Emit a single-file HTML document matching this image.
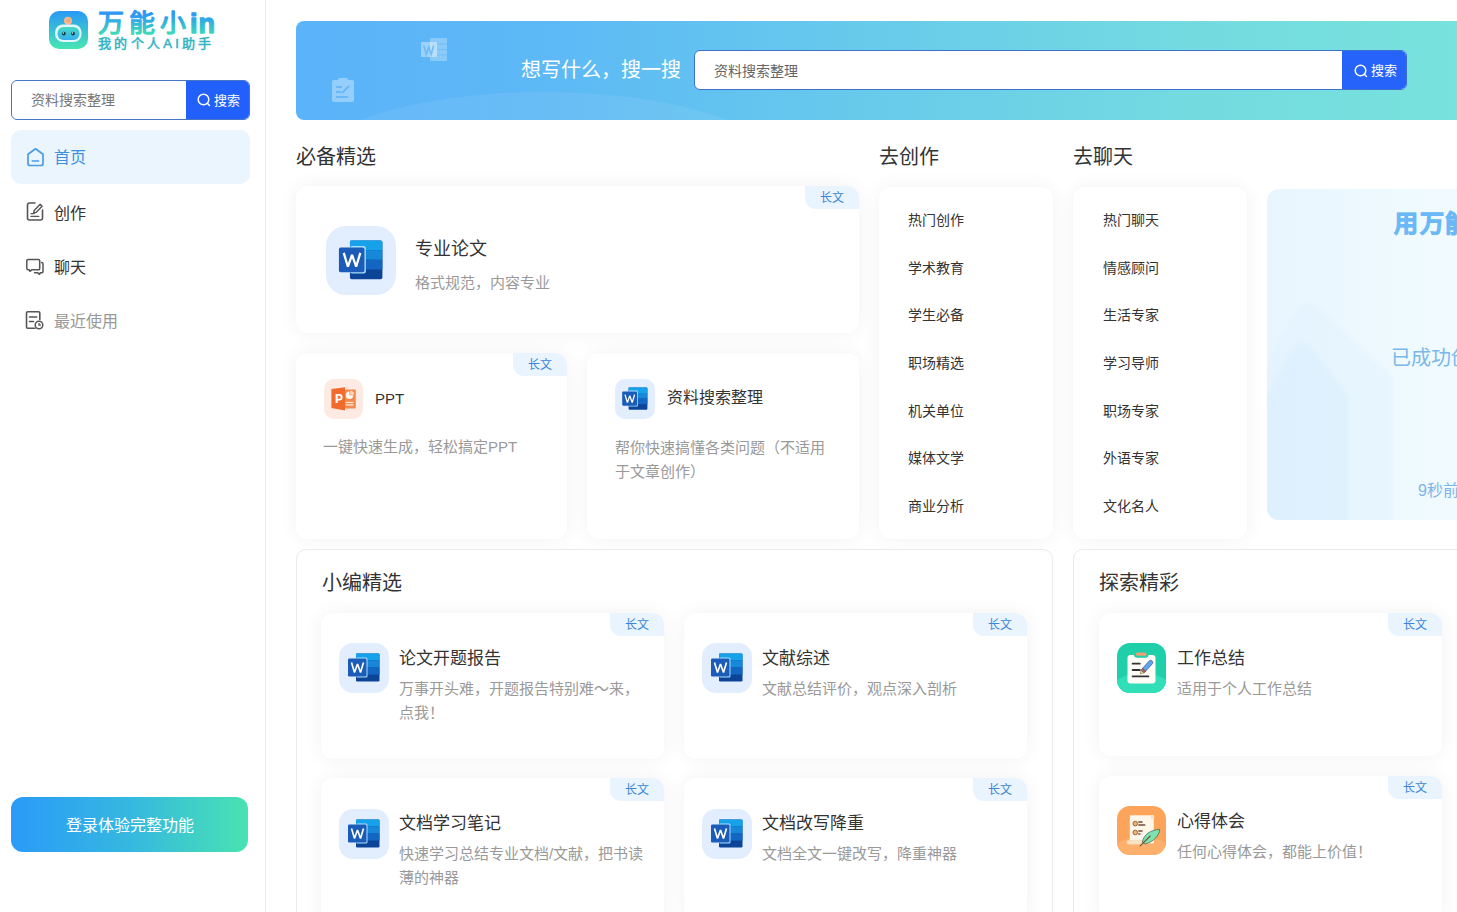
<!DOCTYPE html>
<html lang="zh-CN"><head><meta charset="utf-8">
<style>
*{margin:0;padding:0;box-sizing:border-box}
html,body{width:1457px;height:912px;overflow:hidden;background:#fff;font-family:"Liberation Sans",sans-serif;color:#333}
.abs{position:absolute}
#side{position:absolute;left:0;top:0;width:266px;height:912px;border-right:1px solid #ececec;background:#fff}
.t{position:absolute;white-space:nowrap;line-height:1}
.card{position:absolute;background:#fff;border-radius:12px;box-shadow:0 0 20px rgba(0,0,0,0.055)}
.tag{position:absolute;right:0;top:0;width:54px;height:23px;background:#e9f4fe;color:#3b86d6;font-size:12px;line-height:25px;text-align:center;border-radius:0 12px 0 11px}
.sec{position:absolute;font-size:20px;line-height:1;white-space:nowrap;color:#333}
.ib{position:absolute;background:#e2eefd}
.ct{position:absolute;font-size:17px;line-height:1;white-space:nowrap;color:#333}
.cd{position:absolute;font-size:15px;line-height:22px;color:#999;white-space:nowrap}
.li{position:absolute;left:29px;font-size:14px;line-height:1;color:#333;white-space:nowrap}
</style></head><body>
<div id="side">
  <svg class="abs" style="left:48px;top:10px" width="41" height="40" viewBox="0 0 41 40"><defs><linearGradient id="lg" x1="0" y1="0" x2="0" y2="1"><stop offset="0" stop-color="#2a98f6"/><stop offset="1" stop-color="#46e6b2"/></linearGradient><linearGradient id="lf" x1="0" y1="0" x2="0" y2="1"><stop offset="0" stop-color="#46dcc4"/><stop offset="1" stop-color="#36aef0"/></linearGradient><filter id="lb"><feGaussianBlur stdDeviation="0.6"/></filter></defs><rect x="1" y="1" width="39" height="38" rx="10" fill="url(#lg)"/><circle cx="20" cy="10.8" r="4" fill="#f8b88c" filter="url(#lb)"/><path d="M18.6 9.5v2.5M20.2 9.5v2.5l1.4-2.5v2.5" stroke="#e8946a" stroke-width="0.5" fill="none"/><rect x="7" y="14.5" width="26.6" height="17.5" rx="8" fill="#e2f8fb" filter="url(#lb)"/><rect x="9.5" y="17" width="22" height="13" rx="6" fill="url(#lf)"/><circle cx="15.8" cy="23.6" r="1.9" fill="#0d3a4a"/><circle cx="25" cy="23.6" r="1.9" fill="#0d3a4a"/><circle cx="15.3" cy="23" r="0.7" fill="#fff"/><circle cx="24.5" cy="23" r="0.7" fill="#fff"/></svg>
  <svg class="abs" style="left:94px;top:5px" width="130" height="32" viewBox="0 0 130 32"><defs><linearGradient id="tg" x1="0" y1="0" x2="0" y2="1"><stop offset="0.2" stop-color="#2d98f2"/><stop offset="0.9" stop-color="#3fdcb8"/></linearGradient></defs><g fill="url(#tg)" stroke="url(#tg)" stroke-width="1.3" stroke-linejoin="round" font-size="25" font-family="Liberation Sans, sans-serif"><text x="3.5" y="27" transform="scale(1.04 1)">万</text><text x="34" y="27" transform="scale(1.04 1)">能</text><text x="63.5" y="27" transform="scale(1.04 1)">小</text><text x="96" y="27.5" font-weight="bold" font-size="27" letter-spacing="1">in</text></g></svg>
  <div class="t" style="left:98px;top:37px;font-size:13px;letter-spacing:3.3px;color:#30b3c2;-webkit-text-stroke:0.5px #30b3c2">我的个人AI助手</div>
  <div class="abs" style="left:11px;top:80px;width:239px;height:40px;border:1px solid #4a76c6;border-radius:6px;overflow:hidden">
    <div class="t" style="left:19px;top:12px;font-size:14px;color:#777">资料搜索整理</div>
    <div class="abs" style="left:174px;top:-1px;width:65px;height:40px;background:#2260fb"></div>
    <svg class="abs" style="left:185px;top:12px" width="14" height="14" viewBox="0 0 14 14"><circle cx="6.5" cy="6.5" r="5.3" fill="none" stroke="#fff" stroke-width="1.5"/><path d="M10.3 10.3 L12.5 12.5" stroke="#fff" stroke-width="1.5" stroke-linecap="round"/></svg>
    <div class="t" style="left:202px;top:13px;font-size:13px;color:#fff">搜索</div>
  </div>
  <div class="abs" style="left:11px;top:130px;width:239px;height:54px;border-radius:10px;background:#ebf5fe"></div>
  <svg class="abs" style="left:26px;top:147px" width="19" height="20" viewBox="0 0 19 20"><path d="M2 7.2L9.5 1.8 17 7.2V16.5a2 2 0 0 1-2 2H4a2 2 0 0 1-2-2z" fill="none" stroke="#4a9be8" stroke-width="1.7" stroke-linejoin="round"/><path d="M6.3 14h6.2" stroke="#4a9be8" stroke-width="1.6" stroke-linecap="round"/></svg>
<svg class="abs" style="left:26px;top:201px" width="18" height="20" viewBox="0 0 18 20"><path d="M9 2H3.5a2 2 0 0 0-2 2v13a2 2 0 0 0 2 2h11a2 2 0 0 0 2-2V9" fill="none" stroke="#555" stroke-width="1.6" stroke-linecap="round"/><path d="M8.2 9.5l6-6.2 1.9 1.9-6 6.2-2.4.6z" fill="none" stroke="#555" stroke-width="1.4" stroke-linejoin="round"/><path d="M5 12.6h3M5 15.4h7.7" stroke="#555" stroke-width="1.4" stroke-linecap="round"/></svg>
<svg class="abs" style="left:25px;top:257px" width="20" height="20" viewBox="0 0 20 20"><path d="M3 2.5h10.5a1.2 1.2 0 0 1 1.2 1.2v7.8a1.2 1.2 0 0 1-1.2 1.2H7l-2 1.6-.8-1.6H3a1.2 1.2 0 0 1-1.2-1.2V3.7A1.2 1.2 0 0 1 3 2.5z" fill="none" stroke="#555" stroke-width="1.5" stroke-linejoin="round"/><path d="M16.5 5.5a1.5 1.5 0 0 1 1.5 1.5v7.5a1.2 1.2 0 0 1-1.2 1.2h-1.5l-.8 1.6-2-1.6H9.5" fill="none" stroke="#555" stroke-width="1.5" stroke-linejoin="round" stroke-linecap="round"/></svg>
<svg class="abs" style="left:25px;top:310px" width="20" height="20" viewBox="0 0 20 20"><path d="M14.8 9.5V3a1.2 1.2 0 0 0-1.2-1.2H2.7A1.2 1.2 0 0 0 1.5 3v14a1.2 1.2 0 0 0 1.2 1.2h7.3" fill="none" stroke="#555" stroke-width="1.6" stroke-linecap="round"/><path d="M4.5 7h7.2M4.5 11.5h4" stroke="#555" stroke-width="1.6" stroke-linecap="round"/><circle cx="14" cy="15" r="3.8" fill="#fff" stroke="#555" stroke-width="1.5"/><path d="M14 13v2.2h2" fill="none" stroke="#555" stroke-width="1.3"/></svg>
<div class="t" style="left:54px;top:150px;font-size:16px;color:#3d8fe0">首页</div>
  <div class="t" style="left:54px;top:205.7px;font-size:16px;color:#333">创作</div>
  <div class="t" style="left:54px;top:259.5px;font-size:16px;color:#333">聊天</div>
  <div class="t" style="left:54px;top:313.5px;font-size:16px;color:#999">最近使用</div>
  <div class="abs" style="left:11px;top:797px;width:237px;height:55px;border-radius:12px;background:linear-gradient(90deg,#2b9af8,#35b8e0 50%,#49e2b2)"></div>
  <div class="t" style="left:66px;top:817.5px;font-size:16px;color:#fff">登录体验完整功能</div>
</div>

<div class="abs" style="left:296px;top:21px;width:1200px;height:99px;border-radius:8px;overflow:hidden;background:linear-gradient(90deg,#5bb3f9 0%,#5db8f6 20%,#66c9ec 45%,#73dbe0 75%,#78e3dc 100%)">
<svg class="abs" style="left:0;top:0" width="1200" height="99"><ellipse cx="248" cy="150" rx="240" ry="79" fill="#fff" opacity="0.07"/>
<g fill="#fff"><rect x="134" y="17" width="17" height="23" rx="1" opacity="0.28"/><path d="M141 23h10M141 28.5h10M141 34h10" stroke="#5bb3f9" stroke-width="1" opacity="0.5"/><rect x="125" y="21" width="16" height="15" rx="1" opacity="0.4"/></g><path d="M127.8 24.5l2.4 9 2.5-7.5 2.5 7.5 2.4-9" fill="none" stroke="#5bb3f9" stroke-width="1.6" opacity="0.75"/>
<g opacity="0.35"><rect x="36" y="59" width="22" height="22" rx="2" fill="#fff"/><rect x="42" y="57" width="10" height="4" rx="1.5" fill="#fff"/><path d="M40 66h6M40 71h5M40 76h12M46 72l7-7" stroke="#5bb3f9" stroke-width="1.6" fill="none"/></g>
</svg></div>
<div class="t" style="left:521px;top:60px;font-size:20px;color:#fff">想写什么，搜一搜</div>
<div class="abs" style="left:694px;top:50px;width:713px;height:40px;border:1px solid #3f6fd0;border-radius:6px;background:#fff;overflow:hidden">
  <div class="t" style="left:19px;top:13px;font-size:14px;color:#666">资料搜索整理</div>
  <div class="abs" style="left:647px;top:-1px;width:66px;height:40px;background:#2563fb"></div>
  <svg class="abs" style="left:659px;top:13px" width="14" height="14" viewBox="0 0 14 14"><circle cx="6.5" cy="6.5" r="5.3" fill="none" stroke="#fff" stroke-width="1.5"/><path d="M10.3 10.3 L12.5 12.5" stroke="#fff" stroke-width="1.5" stroke-linecap="round"/></svg><div class="t" style="left:676px;top:13px;font-size:13px;color:#fff">搜索</div>
</div>

<div class="sec" style="left:296px;top:147px">必备精选</div>
<div class="sec" style="left:879px;top:147px">去创作</div>
<div class="sec" style="left:1073px;top:147px">去聊天</div>

<div class="card" style="left:296px;top:186px;width:563px;height:147px">
  <div class="tag">长文</div>
  <div class="ib" style="left:30px;top:40px;width:70px;height:69px;border-radius:20px"><svg width="100%" height="100%" viewBox="0 0 100 100" style="position:absolute;left:0;top:0"><rect x="34" y="21" width="47" height="56" rx="2.5" fill="#0c4598"/><path d="M34 21H78.5a2.5 2.5 0 0 1 2.5 2.5V35H34z" fill="#16a2eb"/><rect x="34" y="35" width="47" height="14" fill="#1787d8"/><rect x="34" y="49" width="47" height="14" fill="#1366c2"/><rect x="34" y="29" width="23" height="40" rx="3" fill="#a8def9"/><rect x="18" y="31" width="37" height="36" rx="2.5" fill="#1b5cb8"/><path d="M25 39L31 59 37 42 43 59 49 39" fill="none" stroke="#fff" stroke-width="3.3" stroke-linejoin="miter" stroke-miterlimit="3"/></svg></div>
  <div class="t" style="left:119px;top:54px;font-size:18px">专业论文</div>
  <div class="t" style="left:119px;top:88.5px;font-size:15px;color:#999">格式规范，内容专业</div>
</div>
<div class="card" style="left:296px;top:353px;width:271px;height:186px">
  <div class="tag">长文</div>
  <div class="ib" style="left:28px;top:26px;width:39px;height:40px;border-radius:10px;background:#fdeae2"><svg width="40" height="40" viewBox="0 0 40 40" style="position:absolute;left:0;top:0"><rect x="20" y="10.4" width="11.8" height="19" rx="1" fill="#f5884c"/><path d="M25.5 12.5a3.8 3.8 0 1 0 3.8 3.8h-3.8z" fill="#fff6ee"/><path d="M26.3 11.7v3.8h3.8a3.8 3.8 0 0 0-3.8-3.8z" fill="#fde0c8"/><rect x="21.5" y="22.8" width="8" height="1.3" fill="#fde6d4"/><rect x="21.5" y="25.3" width="8" height="1.3" fill="#fde6d4"/><path d="M7.4 10L21 8.2V31.5L7.4 29z" fill="#f06b2c"/><path d="M11.6 15h3.7a3.3 3.3 0 0 1 0 6.6h-1.6V24h-2.1zM13.7 16.8v3h1.5a1.5 1.5 0 0 0 0-3z" fill="#fff"/></svg></div>
  <div class="t" style="left:79px;top:38px;font-size:15px">PPT</div>
  <div class="cd" style="left:27px;top:83px">一键快速生成，轻松搞定PPT</div>
</div>
<div class="card" style="left:587px;top:353px;width:272px;height:186px">
  <div class="ib" style="left:28px;top:26px;width:40px;height:40px;border-radius:10px"><svg width="100%" height="100%" viewBox="0 0 100 100" style="position:absolute;left:0;top:0"><rect x="34" y="21" width="47" height="56" rx="2.5" fill="#0c4598"/><path d="M34 21H78.5a2.5 2.5 0 0 1 2.5 2.5V35H34z" fill="#16a2eb"/><rect x="34" y="35" width="47" height="14" fill="#1787d8"/><rect x="34" y="49" width="47" height="14" fill="#1366c2"/><rect x="34" y="29" width="23" height="40" rx="3" fill="#a8def9"/><rect x="18" y="31" width="37" height="36" rx="2.5" fill="#1b5cb8"/><path d="M25 39L31 59 37 42 43 59 49 39" fill="none" stroke="#fff" stroke-width="3.3" stroke-linejoin="miter" stroke-miterlimit="3"/></svg></div>
  <div class="t" style="left:80px;top:37px;font-size:16px">资料搜索整理</div>
  <div class="cd" style="left:28px;top:83px;line-height:24px">帮你快速搞懂各类问题（不适用<br>于文章创作）</div>
</div>

<div class="card" style="left:879px;top:187px;width:174px;height:352px">
  <div class="li" style="top:26.0px">热门创作</div><div class="li" style="top:73.7px">学术教育</div><div class="li" style="top:121.3px">学生必备</div><div class="li" style="top:169.0px">职场精选</div><div class="li" style="top:216.7px">机关单位</div><div class="li" style="top:264.4px">媒体文学</div><div class="li" style="top:312.0px">商业分析</div>
</div>
<div class="card" style="left:1073px;top:187px;width:174px;height:352px"><div class="li" style="left:30px;top:26.0px">热门聊天</div><div class="li" style="left:30px;top:73.7px">情感顾问</div><div class="li" style="left:30px;top:121.3px">生活专家</div><div class="li" style="left:30px;top:169.0px">学习导师</div><div class="li" style="left:30px;top:216.7px">职场专家</div><div class="li" style="left:30px;top:264.4px">外语专家</div><div class="li" style="left:30px;top:312.0px">文化名人</div></div>
<div class="abs" style="left:1267px;top:189px;width:300px;height:331px;border-radius:12px;overflow:hidden;background:linear-gradient(90deg,#e8f5fe,#effaff 45%,#f2fbff)">
<svg class="abs" style="left:0;top:0" width="300" height="331"><defs><filter id="bl" x="-20%" y="-20%" width="140%" height="140%"><feGaussianBlur stdDeviation="2.5"/></filter></defs><g filter="url(#bl)"><path d="M-10 185 L30 122 Q40 107 52 119 L125 187 V340 H-10z" fill="#e2f2fd" opacity="0.5"/><path d="M-10 225 L25 163 Q34 148 45 161 L80 207 V340 H-10z" fill="#d9effc" opacity="0.6"/></g></svg>
<div class="t" style="left:127px;top:23px;font-size:24px;font-weight:bold;letter-spacing:1.6px;color:#6ab9f6;-webkit-text-stroke:0.9px #6ab9f6">用万能小in</div>
<div class="t" style="left:124px;top:159px;font-size:20px;color:#7ab8ea">已成功创作</div>
<div class="t" style="left:151px;top:294px;font-size:16px;color:#7eb5e8">9秒前</div>
</div>

<div class="abs" style="left:296px;top:549px;width:757px;height:400px;border:1px solid #ebebeb;border-radius:10px"></div>
<div class="sec" style="left:322px;top:573px">小编精选</div>
<div class="abs" style="left:1073px;top:549px;width:500px;height:400px;border:1px solid #ebebeb;border-radius:10px"></div>
<div class="sec" style="left:1099px;top:573px">探索精彩</div>
<div class="card" style="left:321px;top:613px;width:343px;height:146px">
  <div class="tag">长文</div>
  <div class="ib" style="left:18px;top:30px;width:50px;height:50px;border-radius:14px"><svg width="100%" height="100%" viewBox="0 0 100 100" style="position:absolute;left:0;top:0"><rect x="34" y="21" width="47" height="56" rx="2.5" fill="#0c4598"/><path d="M34 21H78.5a2.5 2.5 0 0 1 2.5 2.5V35H34z" fill="#16a2eb"/><rect x="34" y="35" width="47" height="14" fill="#1787d8"/><rect x="34" y="49" width="47" height="14" fill="#1366c2"/><rect x="34" y="29" width="23" height="40" rx="3" fill="#a8def9"/><rect x="18" y="31" width="37" height="36" rx="2.5" fill="#1b5cb8"/><path d="M25 39L31 59 37 42 43 59 49 39" fill="none" stroke="#fff" stroke-width="3.3" stroke-linejoin="miter" stroke-miterlimit="3"/></svg></div>
  <div class="ct" style="left:78px;top:37px">论文开题报告</div>
  <div class="cd" style="left:78px;top:64px;line-height:24px">万事开头难，开题报告特别难～来，<br>点我！</div>
</div>
<div class="card" style="left:684px;top:613px;width:343px;height:146px">
  <div class="tag">长文</div>
  <div class="ib" style="left:18px;top:30px;width:50px;height:50px;border-radius:14px"><svg width="100%" height="100%" viewBox="0 0 100 100" style="position:absolute;left:0;top:0"><rect x="34" y="21" width="47" height="56" rx="2.5" fill="#0c4598"/><path d="M34 21H78.5a2.5 2.5 0 0 1 2.5 2.5V35H34z" fill="#16a2eb"/><rect x="34" y="35" width="47" height="14" fill="#1787d8"/><rect x="34" y="49" width="47" height="14" fill="#1366c2"/><rect x="34" y="29" width="23" height="40" rx="3" fill="#a8def9"/><rect x="18" y="31" width="37" height="36" rx="2.5" fill="#1b5cb8"/><path d="M25 39L31 59 37 42 43 59 49 39" fill="none" stroke="#fff" stroke-width="3.3" stroke-linejoin="miter" stroke-miterlimit="3"/></svg></div>
  <div class="ct" style="left:78px;top:37px">文献综述</div>
  <div class="cd" style="left:78px;top:64px;line-height:24px">文献总结评价，观点深入剖析</div>
</div>
<div class="card" style="left:321px;top:778px;width:343px;height:146px">
  <div class="tag">长文</div>
  <div class="ib" style="left:18px;top:31px;width:50px;height:50px;border-radius:14px"><svg width="100%" height="100%" viewBox="0 0 100 100" style="position:absolute;left:0;top:0"><rect x="34" y="21" width="47" height="56" rx="2.5" fill="#0c4598"/><path d="M34 21H78.5a2.5 2.5 0 0 1 2.5 2.5V35H34z" fill="#16a2eb"/><rect x="34" y="35" width="47" height="14" fill="#1787d8"/><rect x="34" y="49" width="47" height="14" fill="#1366c2"/><rect x="34" y="29" width="23" height="40" rx="3" fill="#a8def9"/><rect x="18" y="31" width="37" height="36" rx="2.5" fill="#1b5cb8"/><path d="M25 39L31 59 37 42 43 59 49 39" fill="none" stroke="#fff" stroke-width="3.3" stroke-linejoin="miter" stroke-miterlimit="3"/></svg></div>
  <div class="ct" style="left:78px;top:37px">文档学习笔记</div>
  <div class="cd" style="left:78px;top:64px;line-height:24px">快速学习总结专业文档/文献，把书读<br>薄的神器</div>
</div>
<div class="card" style="left:684px;top:778px;width:343px;height:146px">
  <div class="tag">长文</div>
  <div class="ib" style="left:18px;top:31px;width:50px;height:50px;border-radius:14px"><svg width="100%" height="100%" viewBox="0 0 100 100" style="position:absolute;left:0;top:0"><rect x="34" y="21" width="47" height="56" rx="2.5" fill="#0c4598"/><path d="M34 21H78.5a2.5 2.5 0 0 1 2.5 2.5V35H34z" fill="#16a2eb"/><rect x="34" y="35" width="47" height="14" fill="#1787d8"/><rect x="34" y="49" width="47" height="14" fill="#1366c2"/><rect x="34" y="29" width="23" height="40" rx="3" fill="#a8def9"/><rect x="18" y="31" width="37" height="36" rx="2.5" fill="#1b5cb8"/><path d="M25 39L31 59 37 42 43 59 49 39" fill="none" stroke="#fff" stroke-width="3.3" stroke-linejoin="miter" stroke-miterlimit="3"/></svg></div>
  <div class="ct" style="left:78px;top:37px">文档改写降重</div>
  <div class="cd" style="left:78px;top:64px;line-height:24px">文档全文一键改写，降重神器</div>
</div>
<div class="card" style="left:1099px;top:613px;width:343px;height:143px">
  <div class="tag">长文</div>
  <div class="abs" style="left:18px;top:30px;width:50px;height:50px"><svg width="50" height="50" viewBox="0 0 50 50" style="position:absolute;left:0;top:0"><defs><clipPath id="cg"><rect x="0" y="0" width="49" height="50" rx="13"/></clipPath></defs><g clip-path="url(#cg)"><rect width="50" height="50" fill="#1ecfa9"/><ellipse cx="25" cy="62" rx="40" ry="32" fill="#30deb8"/></g><rect x="10.5" y="12" width="28" height="28.5" rx="3" fill="#fdfcf6"/><path d="M17 12h14.5a3 3 0 0 1-3 2.8h-8.5a3 3 0 0 1-3-2.8z" fill="#1ecfa9"/><rect x="19" y="9.5" width="10.5" height="3.3" rx="1.6" fill="#ef9f74"/><g stroke="#333" stroke-width="1.8" stroke-linecap="round"><path d="M15.6 20.7h7.2M15.6 27h7.2M15.6 33.4h15.8"/></g><g transform="translate(23.3 31) rotate(-48)"><path d="M5.5 -2.1H15.5a2.1 2.1 0 0 1 0 4.2H5.5z" fill="#5ba6f2" stroke="#3a4a7a" stroke-width="0.6"/><rect x="3.3" y="-2.1" width="2.4" height="4.2" fill="#a8645c" stroke="#5a3a3a" stroke-width="0.5"/><path d="M0 0L3.3 -1.9V1.9z" fill="#f5dc8c" stroke="#6b5a3a" stroke-width="0.5"/></g></svg></div>
  <div class="ct" style="left:78px;top:37px">工作总结</div>
  <div class="cd" style="left:78px;top:64px;line-height:24px">适用于个人工作总结</div>
</div>
<div class="card" style="left:1099px;top:776px;width:343px;height:146px">
  <div class="tag">长文</div>
  <div class="abs" style="left:18px;top:30px;width:50px;height:50px"><svg width="50" height="50" viewBox="0 0 50 50" style="position:absolute;left:0;top:0"><defs><clipPath id="co"><rect x="0" y="0" width="49" height="49" rx="13"/></clipPath></defs><g clip-path="url(#co)"><rect width="50" height="50" fill="#fca55a"/><ellipse cx="25" cy="60" rx="40" ry="29" fill="#fdb06b"/></g><rect x="12.8" y="9.3" width="24" height="28" fill="#fdf6e9"/><rect x="34" y="9.3" width="3.2" height="3.5" rx="1" fill="#f6dfbf"/><rect x="9.8" y="34.3" width="17" height="4" rx="1.8" fill="#f7e3c4" stroke="#f3cf9f" stroke-width="0.5"/><circle cx="18.3" cy="17.6" r="2.3" fill="#f4b36a" stroke="#8a5a3a" stroke-width="0.9"/><circle cx="18.3" cy="26.5" r="2.3" fill="#f4b36a" stroke="#8a5a3a" stroke-width="0.9"/><g stroke="#6e4b3b" stroke-width="1.3" stroke-linecap="round"><path d="M21.8 16h3.3M21.8 19h6M21.8 25h3.3M21.8 28h1.2"/></g><path d="M25.3 36.5C26.5 28.5 33.5 24 42.8 23.3 42.3 29.5 37 35.5 28.3 38z" fill="#7ce2b2" stroke="#3e5a4a" stroke-width="0.7"/><path d="M23.2 39.8l10-9.8" stroke="#7a4a34" stroke-width="1.1" stroke-linecap="round"/></svg></div>
  <div class="ct" style="left:78px;top:37px">心得体会</div>
  <div class="cd" style="left:78px;top:64px;line-height:24px">任何心得体会，都能上价值！</div>
</div>
</body></html>
